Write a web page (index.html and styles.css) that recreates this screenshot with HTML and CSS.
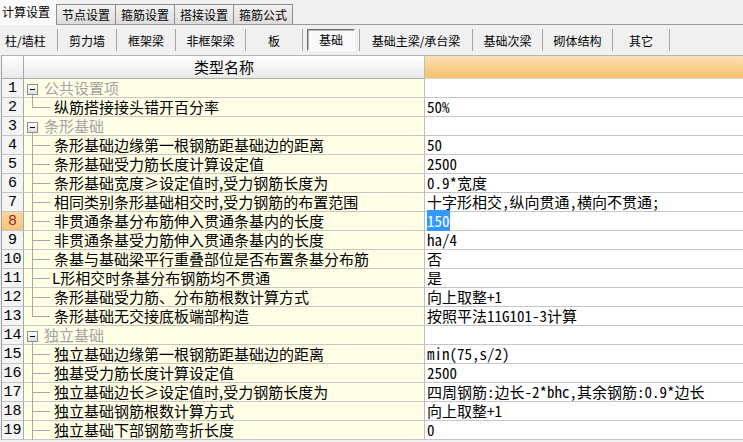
FILE: index.html
```html
<!DOCTYPE html>
<html lang="zh-CN">
<head>
<meta charset="utf-8">
<title>计算设置</title>
<link rel="stylesheet" href="styles.css">
</head>
<body>
<div class="tabs">
  <div class="tab active">计算设置</div>
  <div class="tab">节点设置</div>
  <div class="tab">箍筋设置</div>
  <div class="tab">搭接设置</div>
  <div class="tab">箍筋公式</div>
</div>
<div class="toolbar">
  <div class="tool w57 first">柱/墙柱</div><div class="sep"></div>
  <div class="tool w58">剪力墙</div><div class="sep"></div>
  <div class="tool w58">框架梁</div><div class="sep"></div>
  <div class="tool w69">非框架梁</div><div class="sep"></div>
  <div class="tool w56">板</div><div class="sep"></div>
  <div class="tool w56"><span class="pressed">基础</span></div><div class="sep"></div>
  <div class="tool w112">基础主梁/承台梁</div><div class="sep"></div>
  <div class="tool w69">基础次梁</div><div class="sep"></div>
  <div class="tool w69">砌体结构</div><div class="sep"></div>
  <div class="tool w56">其它</div><div class="sep"></div>
</div>
<div class="grid">
  <div class="head">
    <div class="num hnum"></div>
    <div class="name hname">类型名称</div>
    <div class="val hval"></div>
  </div>
  <div class="row"><div class="num">1</div><div class="name group"><span class="box"></span>公共设置项</div><div class="val"></div></div>
  <div class="row"><div class="num">2</div><div class="name child last">纵筋搭接接头错开百分率</div><div class="val">50%</div></div>
  <div class="row"><div class="num">3</div><div class="name group"><span class="box"></span>条形基础</div><div class="val"></div></div>
  <div class="row"><div class="num">4</div><div class="name child">条形基础边缘第一根钢筋距基础边的距离</div><div class="val">50</div></div>
  <div class="row"><div class="num">5</div><div class="name child">条形基础受力筋长度计算设定值</div><div class="val">2500</div></div>
  <div class="row"><div class="num">6</div><div class="name child">条形基础宽度≥设定值时,受力钢筋长度为</div><div class="val">0.9*宽度</div></div>
  <div class="row"><div class="num">7</div><div class="name child">相同类别条形基础相交时,受力钢筋的布置范围</div><div class="val">十字形相交,纵向贯通,横向不贯通;</div></div>
  <div class="row"><div class="num cur">8</div><div class="name child">非贯通条基分布筋伸入贯通条基内的长度</div><div class="val"><span class="sel">150</span></div></div>
  <div class="row"><div class="num">9</div><div class="name child">非贯通条基受力筋伸入贯通条基内的长度</div><div class="val">ha/4</div></div>
  <div class="row"><div class="num">10</div><div class="name child">条基与基础梁平行重叠部位是否布置条基分布筋</div><div class="val">否</div></div>
  <div class="row"><div class="num">11</div><div class="name child tight">L形相交时条基分布钢筋均不贯通</div><div class="val">是</div></div>
  <div class="row"><div class="num">12</div><div class="name child">条形基础受力筋、分布筋根数计算方式</div><div class="val">向上取整+1</div></div>
  <div class="row"><div class="num">13</div><div class="name child last">条形基础无交接底板端部构造</div><div class="val">按照平法11G101-3计算</div></div>
  <div class="row"><div class="num">14</div><div class="name group"><span class="box"></span>独立基础</div><div class="val"></div></div>
  <div class="row"><div class="num">15</div><div class="name child">独立基础边缘第一根钢筋距基础边的距离</div><div class="val">min(75,s/2)</div></div>
  <div class="row"><div class="num">16</div><div class="name child">独基受力筋长度计算设定值</div><div class="val">2500</div></div>
  <div class="row"><div class="num">17</div><div class="name child">独立基础边长≥设定值时,受力钢筋长度为</div><div class="val">四周钢筋:边长-2*bhc,其余钢筋:0.9*边长</div></div>
  <div class="row"><div class="num">18</div><div class="name child">独立基础钢筋根数计算方式</div><div class="val">向上取整+1</div></div>
  <div class="row"><div class="num">19</div><div class="name child">独立基础下部钢筋弯折长度</div><div class="val">0</div></div>
</div>
</body>
</html>
```
FILE: styles.css
```css
html, body {
  margin: 0;
  padding: 0;
}
body {
  background: #f0f0f0;
  font-family: "Noto Sans CJK SC", "Liberation Sans", sans-serif;
  color: #000;
  width: 743px;
  height: 442px;
  overflow: hidden;
}

/* tabs */
.tabs {
  display: flex;
  height: 25px;
  box-sizing: border-box;
  border-bottom: 1px solid #9a9a9a;
}
.tab {
  box-sizing: border-box;
  height: 20px;
  margin-top: 4px;
  padding: 0 5px;
  border: 1px solid #8e8e8e;
  border-bottom: none;
  border-left: none;
  background: linear-gradient(#f2f2f2, #dcdcdc);
  font-size: 12px;
  line-height: 19px;
  white-space: nowrap;
}
.tab:nth-child(2) { border-left: 1px solid #8e8e8e; }
.tab.active {
  height: 25px;
  margin-top: 0;
  margin-bottom: -1px;
  padding: 0 6px 0 2px;
  border: none;
  background: #fafafa;
  line-height: 24px;
}

/* toolbar */
.toolbar {
  display: flex;
  align-items: center;
  height: 30px;
}
.tool {
  display: flex;
  justify-content: center;
  align-items: center;
  height: 30px;
  font-size: 12px;
  white-space: nowrap;
}
.tool.first { justify-content: flex-start; padding-left: 5px; box-sizing: border-box; }
.w56 { width: 56px; }
.w57 { width: 57px; }
.w58 { width: 58px; }
.w69 { width: 69px; }
.w112 { width: 112px; }
.sep {
  width: 1px;
  height: 22px;
  background: #a6a6a6;
}
.pressed {
  box-sizing: border-box;
  width: 48px;
  height: 22px;
  line-height: 20px;
  text-align: center;
  border: 1px solid;
  border-color: #6e6e6e #ffffff #ffffff #6e6e6e;
  box-shadow: inset 1px 1px 0 #b4b4b4;
  background: #f9f9f9;
}

/* grid */
.grid {
  margin-left: 1px;
  border-left: 1px solid #9e9e9e;
  border-top: 1px solid #b4b4b4;
}
.head, .row {
  display: flex;
}
.head { height: 23px; }
.row { height: 19px; }
.num, .name, .val {
  box-sizing: border-box;
  border-bottom: 1px solid #c6c6c6;
  white-space: nowrap;
}
.num {
  width: 22px;
  flex: none;
  border-right: 1px solid #a8a8a8;
  background: #f4f4f4;
  font-family: "Liberation Mono", "DejaVu Sans Mono", monospace;
  font-size: 15px;
  line-height: 19px;
  text-align: center;
}
.num.cur {
  background: linear-gradient(#fbd7a0, #f6c47c);
  color: #9a2c2c;
}
.name {
  width: 401px;
  flex: none;
  position: relative;
  border-right: 1px solid #bdbdbd;
  background: #ffffe6;
  font-size: 15px;
  line-height: 18px;
  padding-left: 30px;
}
.val {
  flex: 1;
  background: #fff;
  padding-left: 2px;
  font-family: "Noto Sans Mono CJK SC", "Noto Sans CJK SC", monospace;
  font-size: 15px;
  line-height: 18px;
}
.hnum, .hname {
  background: linear-gradient(#ffffff, #e9e9e9);
  border-bottom-color: #b0b0b0;
}
.hname {
  padding-left: 0;
  text-align: center;
  line-height: 22px;
}
.hval {
  background: linear-gradient(#fbe2b6, #f4c06c);
  border-bottom-color: #d8d8d8;
}

/* tree */
.group {
  color: #a3a3a3;
  padding-left: 20px;
}
.box {
  position: absolute;
  left: 3px;
  top: 5px;
  box-sizing: border-box;
  width: 11px;
  height: 11px;
  border: 1px solid #8c8c8c;
  background: linear-gradient(#ffffff, #dedede);
}
.box::after {
  content: "";
  position: absolute;
  left: 2px;
  top: 4px;
  width: 5px;
  height: 1px;
  background: #000;
}
.group::before {
  content: "";
  position: absolute;
  left: 8px;
  top: 16px;
  bottom: -1px;
  border-left: 1px solid #a8a8a8;
}
.child::before {
  content: "";
  position: absolute;
  left: 8px;
  top: 0;
  bottom: -1px;
  border-left: 1px solid #a8a8a8;
}
.child.last::before {
  bottom: 9px;
}
.child::after {
  content: "";
  position: absolute;
  left: 8px;
  top: 9px;
  width: 18px;
  border-top: 1px solid #a8a8a8;
}
.child.tight { padding-left: 28px; }
.sel {
  background: #3399ff;
  color: #fff;
}
```
